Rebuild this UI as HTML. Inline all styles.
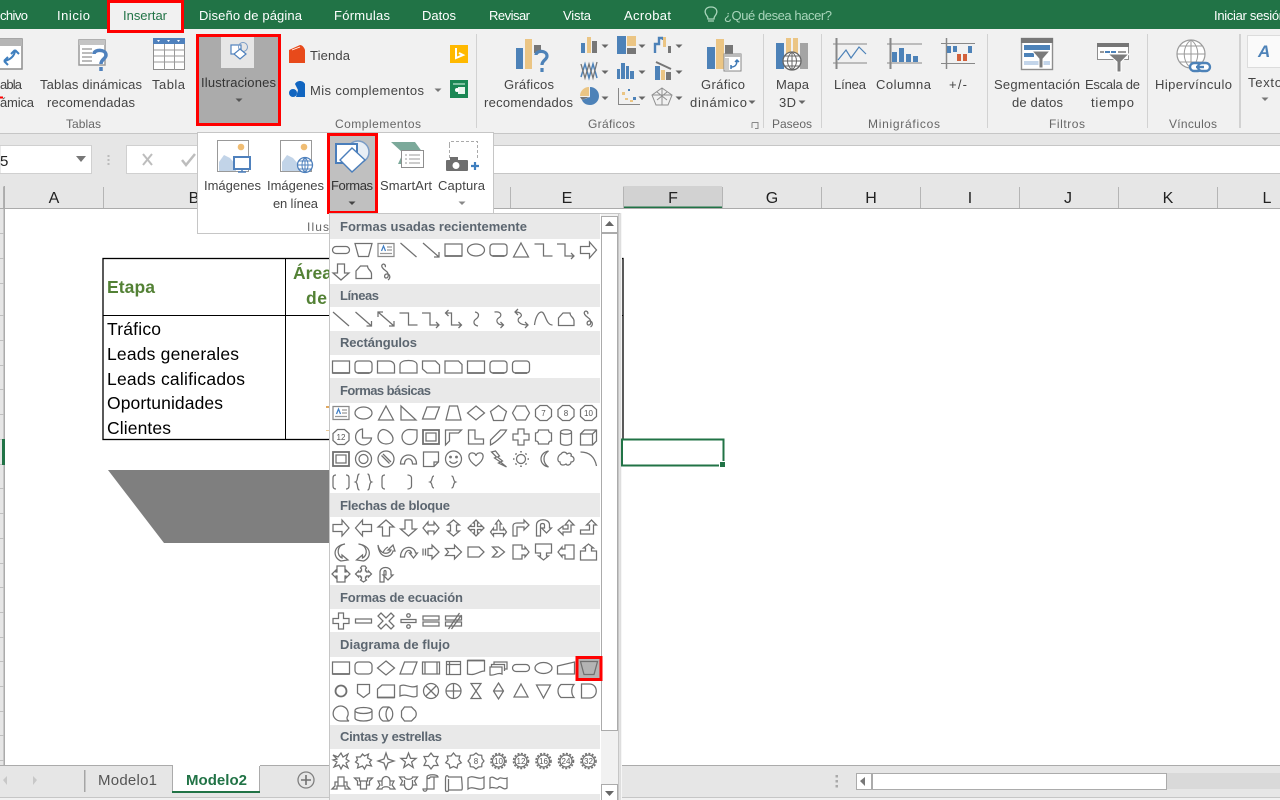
<!DOCTYPE html>
<html lang="es"><head><meta charset="utf-8"><title>Excel - Insertar formas</title>
<style>
html,body{margin:0;padding:0;background:#fff;width:1280px;height:800px;overflow:hidden}
svg{display:block}
text{font-family:"Liberation Sans",Arial,sans-serif;font-size:13px;fill:#444}
.t{fill:#fff;font-size:13px}
.g{fill:#666;font-size:12px}
.h{font-weight:bold;fill:#5c6670;font-size:13px}
.c{font-size:16px;fill:#222}
.d{font-size:17.5px;fill:#000}
.b{font-size:17.5px;font-weight:bold;fill:#538135}
.sh{fill:none;stroke:#707070;stroke-width:1.25}
.n{font-size:8px;fill:#555;stroke:none;text-anchor:middle}
</style></head><body>
<svg width="1280" height="800" viewBox="0 0 1280 800" xmlns="http://www.w3.org/2000/svg">
<defs>
<path id="ar" d="M-3.5-1.5H3.5L0 2Z"/>
<g id="rr"><rect x="-8.5" y="-3.5" width="17" height="7" rx="3.5"/></g>
<g id="mo"><path d="M-8.5-6.5H8.5L5 6.5H-5Z"/></g>
<g id="tb"><rect x="-8" y="-6.5" width="16" height="13" stroke="#8a8a8a"/><path d="M-4.5 1-2.5-4-.5 1" stroke="#3f7ec4"/><path d="M-6 3.5H6M1-3H6M1 0H6" stroke="#999"/></g>
<g id="ln"><path d="M-8-7 8 7"/></g>
<g id="la"><path d="M-8-7 8 7M8 2V7H3"/></g>
<g id="da"><path d="M-8-7 8 7M8 2V7H3M-8-2V-7H-3"/></g>
<g id="rc"><rect x="-8.5" y="-6" width="17" height="12"/><path d="M-8.5 6H8.5" stroke-width="1.8"/></g>
<g id="el"><ellipse rx="8.5" ry="6"/></g>
<g id="rrc"><rect x="-8.5" y="-6" width="17" height="12" rx="3"/><path d="M-6 6H6" stroke-width="1.8"/></g>
<g id="tri"><path d="M0-7 7.5 7H-7.5Z"/></g>
<g id="eb"><path d="M-9-6H0V6H9"/></g>
<g id="eba"><path d="M-9-6H-1V6H8M5 3 8 6 5 9"/></g>
<g id="dea"><path d="M-8-6H-2V6H8M5 3 8 6 5 9M-5-9-8-6-5-3"/></g>
<g id="ra"><path d="M-8-3.5H1V-8L8 0 1 8V3.500H-8Z"/></g>
<g id="la2"><path d="M8-3.500H-1V-8L-8 0-1 8V3.500H8Z"/></g>
<g id="ua"><path d="M-3.500 8V-1H-8L0-8 8-1H3.500V8Z"/></g>
<g id="dwa"><path d="M-3.500-8V1H-8L0 8 8 1H3.500V-8Z"/></g>
<g id="ff"><path d="M-7.500 6.500V-1L-3-6H4C4-2 8-2 8 2V6.500Z"/></g>
<g id="sc"><path d="M-3-8C-6-6-3-3 0-1 3 1 3 6 0 6-2 6-2 2 1 2 4 2 5 6 2 8M-3-8C-1-8 0-6-1-5"/></g>
<g id="cv"><path d="M-1-7C4-6 3-2 0 0-3 2-3 6 2 7"/></g>
<g id="cva"><path d="M-4-7C3-8 4-3 0-1-3 1-2 6 5 6M2 3 5 6 2 9"/></g>
<g id="dcv"><path d="M-6-7C1-7 2-3-2-1-4 1-3 6 7 6M4 3 7 6 4 9M-3-10-6-7-3-4"/></g>
<g id="sca"><path d="M-9 6C-8-2-5-7-2-7 2-7 2 6 9 6"/></g>
<g id="sn1"><path d="M-8.500 6V-6H5L8.500-2.500V6Z"/></g>
<g id="sn2"><path d="M-8.500 6V-2C-8.500-5-5-6.500 0-6.500S8.500-5 8.500-2V6Z"/></g>
<g id="sn3"><path d="M-8.500-6H4.500L8.500-2V6H-4L-8.500 2Z"/></g>
<g id="sn4"><path d="M-8.500 6V-6H3C6-6 8.500-4 8.500-1V6Z"/></g>
<g id="rtri"><path d="M-7.500-7 7.500 7H-7.500Z"/></g>
<g id="pa"><path d="M-4-6H8.500L4 6H-8.500Z"/></g>
<g id="tr"><path d="M-4-7H4L7.500 7H-7.500Z"/></g>
<g id="di"><path d="M0-7 8.500 0 0 7-8.500 0Z"/></g>
<g id="pe"><path d="M0-7.500 8-1.500 5 7.500H-5L-8-1.500Z"/></g>
<g id="he"><path d="M-4.500-7H4.500L8.500 0 4.500 7H-4.500L-8.500 0Z"/></g>
<g id="oc"><path d="M-3.500-7.500H3.500L8-3.500V3.500L3.500 7.500H-3.500L-8 3.500V-3.500Z"/></g>
<g id="pi"><path d="M-1-8A8 8 0 1 0 8 1H-1Z"/></g>
<g id="ch"><path d="M-3-7.500C2-7.500 7-2 7 2 7 6 3 7 0 7-4 7-8 4-8 0-8-4-6-7-3-7.500Z"/></g>
<g id="td"><path d="M8.500-7V0A7.500 7.500 0 1 1 1-7.500Z"/></g>
<g id="fr"><rect x="-8" y="-7" width="16" height="14" stroke-width="1.8"/><rect x="-5" y="-4" width="10" height="8"/></g>
<g id="hf"><path d="M-8 8V-7H8L5-4H-4V4Z"/></g>
<g id="lsh"><path d="M-7.500-7H-1V2H7.500V7H-7.500Z"/></g>
<g id="ds"><path d="M-8 8V3L2-7H8C6-3-2 5-8 8Z"/></g>
<g id="pl"><path d="M-3-8H3V-3H8V3H3V8H-3V3H-8V-3H-3Z"/></g>
<g id="pq"><path d="M-5-7H5C5-5 6-4 8-4V4C6 4 5 5 5 7H-5C-5 5-6 4-8 4V-4C-6-4-5-5-5-7Z"/></g>
<g id="cn"><path d="M-5.500-5V6C-5.500 9 5.500 9 5.500 6V-5C5.500-8-5.500-8-5.500-5 -5.500-2 5.500-2 5.500-5"/></g>
<g id="cu"><path d="M-8-3H4V8H-8ZM-8-3-4-7H8V4L4 8M4-3 8-7"/></g>
<g id="don"><circle r="8"/><circle r="4.500"/></g>
<g id="no"><circle r="8"/><path d="M-4.500-3.500 3.500 4.500M-3-5 5 3"/></g>
<g id="ba"><path d="M-8 5C-8-7 8-7 8 5H4C4-2-4-2-4 5Z"/></g>
<g id="fc"><path d="M-7.500-7H7.500V3L3 7.500H-7.500ZM7.500 3H3V7.500"/></g>
<g id="sm"><circle r="8"/><circle cx="-3" cy="-2" r=".8"/><circle cx="3" cy="-2" r=".8"/><path d="M-4 2C-2 5 2 5 4 2"/></g>
<g id="ht"><path d="M0 7C-10 0-8-7-3-6-1-6 0-4 0-3 0-4 1-6 3-6 8-7 10 0 0 7Z"/></g>
<g id="lt"><path d="M-7-7-3-8 1-3-1-2 4 2 2 3 8 8 0 4 2 3-4-1-2-2Z"/></g>
<g id="su"><circle r="4.500"/><path d="M0-8V-6.500M0 6.500V8M-8 0H-6.500M6.500 0H8M-5.500-5.500-4.500-4.500M4.500 4.500 5.500 5.500M-5.500 5.500-4.500 4.500M4.500-4.500 5.500-5.500" stroke-width="1.600"/></g>
<g id="mn"><path d="M5-8C-5-6-5 6 5 8-1 4-1-4 5-8Z"/></g>
<g id="cl"><path d="M-5-5C-3-8 0-7 1-5 4-7 6-5 5-3 9-2 9 3 5 3 5 6 1 7 0 5-3 7-6 6-6 3-9 3-9-3-5-5Z"/></g>
<g id="ac"><path d="M-8-7C0-7 6-3 8 7"/></g>
<g id="db"><path d="M-5-7C-7-7-8-6-8-4V-2M-8 2V4C-8 6-7 7-5 7M5-7C7-7 8-6 8-4V-2M8 2V4C8 6 7 7 5 7M-8-2V2M8-2V2"/></g>
<g id="dbr"><path d="M-4-8C-7-8-5-1-8 0-5 1-7 8-4 8M4-8C7-8 5-1 8 0 5 1 7 8 4 8"/></g>
<g id="lb"><path d="M-1-7C-3-7-4-6-4-4V4C-4 6-3 7-1 7"/></g>
<g id="rb"><path d="M-1-7C1-7 3-6 3-4V4C3 6 1 7-1 7"/></g>
<g id="lbr"><path d="M3-6C0-6 2-1-1 0 2 1 0 6 3 6"/></g>
<g id="rbr"><path d="M-2-6C1-6-1-1 2 0-1 1 1 6-2 6"/></g>
<g id="lr"><path d="M-8 0-3-6V-3H3V-6L8 0 3 6V3H-3V6Z"/></g>
<g id="ud"><path d="M0-8 6-3H3V3H6L0 8-6 3H-3V-3H-6Z"/></g>
<g id="qu"><path d="M0-8 3-5H1.500V-1.500H5V-3L8 0 5 3V1.500H1.500V5H3L0 8-3 5H-1.500V1.500H-5V3L-8 0-5-3V-1.500H-1.500V-5H-3Z"/></g>
<g id="lru"><path d="M0-8 3-4H1.500V2H5V0L8 4 5 8V5.500H-5V8L-8 4-5 0V2H-1.500V-4H-3Z"/></g>
<g id="be"><path d="M-8 8V-2C-8-4-6-5-4-5H3V-8L8-3 3 2V-1H-4V8Z"/></g>
<g id="ut"><path d="M-7 8V-3C-7-10 6-10 6-3V0H8L3 5-2 0H1V-3C1-5-3-5-3-3V8Z"/></g>
<g id="lu"><path d="M3-8 8-3H5V4H-3V7L-8 2-3-2V1H2V-3H-1Z"/></g>
<g id="bu"><path d="M3-8 8-3H5V6H-8V2H1V-3H-2Z"/></g>
<g id="cr"><path d="M4-8C-4-7-5 3 1 6V3L7 8 0 9C-8 6-9-6 4-8Z"/></g>
<g id="cl2"><path d="M-5-8C4-7 5 3-1 6V3L-7 8 0 9C8 6 9-6-5-8Z"/></g>
<g id="cup"><path d="M-8-7C-6 3 3 3 5-2H2L7-7 9-1H7C5 7-7 7-8-7ZM-3 1C-2-2 0-4 2-5"/></g>
<g id="cdn"><path d="M-8 5C-8-7 6-7 7 1H9L5 6 1 1H3C2-3-3-3-4 5Z"/></g>
<g id="st"><path d="M-8-3.500V3.500M-5.500-3.500V3.500M-3-3.500H1V-7L8 0 1 7V3.500H-3Z"/></g>
<g id="no2"><path d="M-8-3.500H1V-7L8 0 1 7V3.500H-8L-5 0Z"/></g>
<g id="pg"><path d="M-8-5H3L8 0 3 5H-8Z"/></g>
<g id="chv"><path d="M-6-5H0L6 0 0 5H-6L-1 0Z"/></g>
<g id="rca"><path d="M-8-7H1V-3H4V-5L8 0 4 5V3H1V7H-8Z"/></g>
<g id="dca"><path d="M-8-8H8V1H3V4H5L0 8-5 4H-3V1H-8Z"/></g>
<g id="lca"><path d="M8-7H-1V-3H-4V-5L-8 0-4 5V3H-1V7H8Z"/></g>
<g id="uca"><path d="M-8 8H8V-1H3V-4H5L0-8-5-4H-3V-1H-8Z"/></g>
<g id="lrc"><path d="M-4-8H4V-2H5V-4L9 0 5 4V2H4V8H-4V2H-5V4L-9 0-5-4V-2H-4Z"/></g>
<g id="qc"><path d="M-1.500-8H1.500L3-6 2-5V-3H3V-2H5V-3L8 0 5 3V2H3V3H2V5L3 6 0 8-3 6-2 5V3H-3V2H-5V3L-8 0-5-3V-2H-3V-3H-2V-5L-3-6Z"/></g>
<g id="ca"><path d="M-6 8V-2C-6-8 5-8 5-2V1H7L2 6-3 1H0V-2C0-4-2-4-2-2V8Z"/></g>
<g id="eqp"><path d="M-2.500-8H2.500V-2.500H8V2.500H2.500V8H-2.500V2.500H-8V-2.500H-2.500Z"/></g>
<g id="eqm"><rect x="-8" y="-2" width="16" height="4"/></g>
<g id="eqx"><path d="M-5-8 0-3 5-8 8-5 3 0 8 5 5 8 0 3-5 8-8 5-3 0-8-5Z"/></g>
<g id="eqd"><rect x="-7.500" y="-1.500" width="15" height="3"/><circle cy="-5.500" r="1.800"/><circle cy="5.500" r="1.800"/></g>
<g id="eqe"><rect x="-8" y="-5" width="16" height="4"/><rect x="-8" y="1" width="16" height="4"/></g>
<g id="eqn"><rect x="-8" y="-5" width="16" height="4"/><rect x="-8" y="1" width="16" height="4"/><path d="M-5 8 6-8M-2 8 8-6"/></g>
<g id="fa"><rect x="-8.500" y="-6" width="17" height="12" rx="3.500"/></g>
<g id="fp"><rect x="-8.500" y="-6" width="17" height="12"/><path d="M-6-6V6M6-6V6"/></g>
<g id="fi"><rect x="-7" y="-6.500" width="14" height="13"/><path d="M-7-3.500H7M-4-6.500V6.500"/></g>
<g id="fd"><path d="M-8.500-7.500H8.500V3C3 3 0 8-8.500 6Z"/><path d="M-8.500-7.500H8.500" stroke-width="1.800"/></g>
<g id="fm"><path d="M-8.500-1H3.500V6C-1 4-4 8-8.500 7ZM-7-1V-3.500H6V3M-4.500-3.500V-6H8.500V1H6"/></g>
<g id="ft"><rect x="-8.500" y="-3.500" width="17" height="7" rx="3.500"/></g>
<g id="fe"><ellipse rx="8.500" ry="5.500"/></g>
<g id="fmi"><path d="M-8.500-2 8.500-6V6H-8.500Z"/></g>
<g id="fc2"><circle r="5.500" stroke-width="1.800"/></g>
<g id="fo"><path d="M-6-6.500H6V2L0 6.500-6 2Z"/></g>
<g id="fcd"><path d="M-4-6H8.500V6.500H-8.500V-2Z"/><path d="M-8.500 6.500H8.500" stroke-width="1.800"/></g>
<g id="fta"><path d="M-8.500-5C-4-8 2-2 8.500-5V5C4 8-2 2-8.500 5Z"/></g>
<g id="fsj"><circle r="7.500"/><path d="M-5-5 5 5M-5 5 5-5"/></g>
<g id="for"><circle r="7.500"/><path d="M-7.500 0H7.500M0-7.500V7.500"/></g>
<g id="fcl"><path d="M-5-7.500H5L-5 7.500H5Z"/></g>
<g id="fso"><path d="M0-8 5 0 0 8-5 0ZM-5 0H5"/></g>
<g id="fex"><path d="M0-7 7 6H-7Z"/></g>
<g id="fme"><path d="M-7-6H7L0 7Z"/></g>
<g id="fsd"><path d="M-5-6.500H8C5-3 5 3 8 6.500H-5C-9 3-9-3-5-6.500Z"/></g>
<g id="fde"><path d="M-7-7H1C10-7 10 7 1 7H-7Z"/></g>
<g id="fsq"><path d="M8 7H0A7.500 7.500 0 1 1 6 3.500C6 5 6 6 8 7Z"/></g>
<g id="fdk"><path d="M-8.500-3.500V4C-8.500 8 8.500 8 8.500 4V-3.500C8.500-7.500-8.500-7.500-8.500-3.500-8.500 .5 8.500 .5 8.500-3.500"/></g>
<g id="fda"><path d="M-3-7H3C8-4 8 4 3 7H-3C-8 4-8-4-3-7ZM3-7C-1-4-1 4 3 7"/></g>
<g id="fdi"><path d="M-4-7H3L7-3C8-1 8 1 7 3L3 7H-4L-7 3V-3Z"/></g>
<g id="x1"><path d="M-8-6-3-4 0-8 2-4 7-7 5-2 8 0 5 2 7 7 2 4 0 8-2 4-7 6-4 1-8-1-4-2Z"/></g>
<g id="x2"><path d="M-7-4-3-4-1-7 1-5 5-7 4-3 8-1 6 1 8 5 3 4 1 8-1 5-6 7-5 3-8 1-6-1Z"/></g>
<g id="s4"><path d="M0-8 2-2 8 0 2 2 0 8-2 2-8 0-2-2Z"/></g>
<g id="s5"><path d="M0-8 2-2.600H7.600L3.100 1 4.700 6.500 0 3.200-4.700 6.500-3.100 1-7.600-2.600H-2Z"/></g>
<g id="s6"><path d="M0-8 2.600-4.500H7L4.800 0 7 4.500H2.600L0 8-2.600 4.500H-7L-4.800 0-7-4.500H-2.600Z"/></g>
<g id="s7"><path d="M0-8 2.400-5 6.250-5 5.400-1.200 7.800 1.800 4.300 3.400 3.500 7.200 0 5.500-3.500 7.200-4.300 3.400-7.800 1.800-5.400-1.200-6.250-5-2.400-5Z"/></g>
<g id="s8"><path d="M0-8 2.500-6 5.700-5.700 6-2.500 8 0 6 2.500 5.700 5.700 2.500 6 0 8-2.500 6-5.700 5.700-6 2.500-8 0-6-2.500-5.700-5.700-2.500-6Z"/></g>
<g id="sd"><circle r="6"/><circle r="7.500" stroke-dasharray="2 1.500" stroke-width="1.600"/></g>
<g id="rb1"><path d="M-9 6-6 3V-1H-3V-6H3V-1H6V3L9 6H4V3H-4V6ZM-3-1V3M3-1V3"/></g>
<g id="rb2"><path d="M-9-5-6-2V2H-3V6H3V2H6V-2L9-5H4V-2H-4V-5ZM-3-2V2M3-2V2"/></g>
<g id="rb3"><path d="M-9 6-6 2-8-2H-4C-4-8 4-8 4-2H8L6 2 9 6H4C4 3-4 3-4 6ZM-4-2V3M4-2V3"/></g>
<g id="rb4"><path d="M-9-6-6-2-8 2H-4C-4 8 4 8 4 2H8L6-2 9-6H4C4-3-4-3-4-6ZM-4 2V-3M4 2V-3"/></g>
<g id="sv"><path d="M-4-6C-4-9 7-9 7-6H-1M-4-6V6C-4 9-8 9-8 6H3V-6M-1-6C-1-4-4-4-4-6"/></g>
<g id="sh2"><path d="M-8-4V7C-8 9-5 9-5 7H8C9 7 9 5 8-6H-5C-6-8-8-8-8-4M-5-4V7"/></g>
<g id="wv"><path d="M-8-5C-3-9 3-2 8-6V5C3 9-3 2-8 6Z"/></g>
<g id="dw"><path d="M-8.500-5C-5-8-2-2 0-4 2-7 5-3 8.500-5V5C5 8 2 2 0 4-2 7-5 3-8.500 5Z"/></g>
</defs>

<!-- sheet -->
<rect width="1280" height="800" fill="#fff"/>
<rect x="0" y="186" width="1280" height="22" fill="#e6e6e6"/>
<rect x="623" y="186" width="99" height="22" fill="#d2d2d2"/>
<rect x="623" y="206.500" width="99" height="2" fill="#217346"/>
<rect y="208" width="1280" height="1" fill="#ababab"/>
<path d="M103.500 187V208M510.500 187V208M623.500 187V208M722.500 187V208M821.500 187V208M920.500 187V208M1019.500 187V208M1118.500 187V208M1217.500 187V208M3.500 187V208" stroke="#b5b5b5" fill="none"/>
<g text-anchor="middle"><text class="c" x="54" y="203">A</text><text class="c" x="194" y="203">B</text><text class="c" x="567" y="203">E</text><text class="c" x="673" y="203">F</text><text class="c" x="772" y="203">G</text><text class="c" x="871" y="203">H</text><text class="c" x="970" y="203">I</text><text class="c" x="1068" y="203">J</text><text class="c" x="1168" y="203">K</text><text class="c" x="1267" y="203">L</text></g>
<rect x="0" y="209" width="4" height="556" fill="#e6e6e6"/>
<rect x="3.500" y="186" width="1.500" height="580" fill="#ababab"/>
<path d="M0 233.500H4M0 258.500H4M0 283.500H4M0 315.500H4M0 340.500H4M0 365.500H4M0 389.500H4M0 414.500H4M0 439.500H4M0 464.500H4M0 488.500H4M0 513.500H4M0 538.500H4M0 563.500H4M0 587.500H4M0 612.500H4M0 637.500H4M0 661.500H4M0 686.500H4M0 711.500H4M0 735.500H4M0 760.500H4" stroke="#c0c0c0"/>
<rect x="2" y="439" width="3" height="26" fill="#217346"/>

<!-- table -->
<rect x="103" y="258.500" width="520" height="181" fill="none" stroke="#000" stroke-width="1.300"/>
<path d="M285.500 258V439M103 315.500H623" stroke="#000"/>
<text class="b" x="107" y="293" textLength="48">Etapa</text>
<text class="b" x="293" y="279" textLength="39">Área</text>
<text class="b" x="306" y="304" textLength="21">de</text>
<text class="d" x="107" y="335" textLength="54">Tráfico</text>
<text class="d" x="107" y="360" textLength="132">Leads generales</text>
<text class="d" x="107" y="385" textLength="138">Leads calificados</text>
<text class="d" x="107" y="409" textLength="116">Oportunidades</text>
<text class="d" x="107" y="434" textLength="64">Clientes</text>
<rect x="326" y="406" width="3" height="2" fill="#e0a860"/><rect x="326" y="430" width="3" height="1" fill="#eccb98"/>
<polygon points="108,470 330,470 330,543 164,543" fill="#7f7f7f"/>

<!-- sheet tabs -->
<rect x="0" y="765" width="1280" height="32" fill="#e6e6e6"/>
<rect y="765" width="1280" height="1" fill="#ababab"/>
<rect y="797" width="1280" height="1" fill="#c6c6c6"/><rect y="798" width="1280" height="2" fill="#f1f1f1"/>
<path d="M3 780 7 776V785ZM37 780 33 776V785Z" fill="#c8c8c8"/>
<rect x="84" y="770" width="1.500" height="22" fill="#a5a5a5"/>
<text x="98" y="785" textLength="59" style="font-size:15px;fill:#555">Modelo1</text>
<rect x="173" y="765" width="87" height="27" fill="#fff"/>
<path d="M172.500 766V792M259.500 766V792" stroke="#ababab"/>
<rect x="172" y="791" width="88" height="2" fill="#217346"/>
<text x="186" y="785" textLength="61" style="font-size:15px;font-weight:bold;fill:#217346">Modelo2</text>
<circle cx="306" cy="780" r="8" fill="none" stroke="#808080" stroke-width="1.300"/><path d="M301 780H311M306 775V785" stroke="#707070" stroke-width="1.600"/>
<rect x="835.500" y="775" width="2.500" height="2.500" fill="#aaa"/><rect x="835.500" y="780" width="2.500" height="2.500" fill="#aaa"/><rect x="835.500" y="785" width="2.500" height="2.500" fill="#aaa"/>
<rect x="1166" y="773" width="114" height="16" fill="#d9d9d9"/>
<rect x="856.500" y="773.500" width="310" height="16" fill="#fff" stroke="#ababab"/>
<rect x="871" y="774" width="2" height="15" fill="#ababab"/>
<path d="M860 781 865 777V786Z" fill="#777"/>

<!-- formula bar -->
<rect y="133" width="1280" height="53" fill="#e6e6e6"/>
<rect y="145" width="1280" height="1" fill="#c6c6c6"/>
<rect y="146" width="1280" height="27" fill="#fff"/>
<rect y="173" width="1280" height="1" fill="#c6c6c6"/>
<rect x="91" y="145" width="35" height="29" fill="#e6e6e6"/>
<rect x="0" y="145.500" width="91.500" height="28" fill="#fff" stroke="#d0d0d0"/>
<text x="0" y="166" style="font-size:15px;fill:#222">5</text>
<path d="M76 156H86L81 162Z" fill="#777"/>
<path d="M108.500 155v2M108.500 159v2M108.500 163v2" stroke="#bbb" stroke-width="2"/>
<rect x="126.500" y="145.500" width="80" height="28" fill="#fff" stroke="#d0d0d0"/>
<path d="M143 154 152 165M152 154 143 165" stroke="#bdbdbd" stroke-width="2"/>
<path d="M182 160 186 165 195 154" stroke="#bdbdbd" stroke-width="2.500" fill="none"/>

<!-- title & ribbon -->
<rect y="29" width="1280" height="104" fill="#f1f1f1"/>
<rect y="133" width="1280" height="1" fill="#c6c6c6"/>
<rect width="1280" height="29" fill="#217346"/>
<text class="t" x="0" y="20" textLength="28">chivo</text>
<text class="t" x="57" y="20" textLength="33">Inicio</text>
<rect x="108.500" y="1.500" width="74" height="30" fill="#f1f1f1" stroke="#f00" stroke-width="3"/>
<text x="123" y="20" textLength="44" style="fill:#217346">Insertar</text>
<text class="t" x="199" y="20" textLength="103">Diseño de página</text>
<text class="t" x="334" y="20" textLength="56">Fórmulas</text>
<text class="t" x="422" y="20" textLength="34">Datos</text>
<text class="t" x="489" y="20" textLength="41">Revisar</text>
<text class="t" x="563" y="20" textLength="28">Vista</text>
<text class="t" x="624" y="20" textLength="47">Acrobat</text>
<path d="M707 16C703 11 706 7 711 7S719 11 715 16C714 17 714 18 714 19H708C708 18 708 17 707 16ZM708 21H714" fill="none" stroke="#a9d5bb" stroke-width="1.300"/>
<text x="724" y="20" textLength="108" style="fill:#a9d5bb">¿Qué desea hacer?</text>
<text class="t" x="1214" y="20" textLength="72">Iniciar sesión</text>

<!-- separators -->
<path d="M476.500 34V128M763.500 34V128M821.500 34V128M987.500 34V128M1147.500 34V128" stroke="#d2d2d2"/>
<rect x="1239" y="34" width="2" height="94" fill="#d2d2d2"/>

<!-- Tablas -->
<rect x="-5" y="39" width="27" height="30" fill="#fff" stroke="#8e8e8e" stroke-width="1.500"/><rect x="-5" y="39" width="27" height="7" fill="#b5b5b5"/>
<path d="M15 50C15 56 10 60 4 61M4 61 8 57M4 61 8 65M15 50 11 54M15 50 19 54" fill="none" stroke="#3f7fbf" stroke-width="2"/>
<text x="0" y="89" textLength="22">abla</text><text x="0" y="107" textLength="34">ámica</text>
<path d="M0 97.500H3" stroke="#f00" stroke-width="2"/>
<rect x="79" y="40" width="26" height="25" fill="#fff" stroke="#9a9a9a" stroke-width="1.500"/><rect x="79" y="40" width="26" height="5" fill="#c4c4c4"/>
<path d="M82 49H92M82 53H92M82 57H92M82 61H92" stroke="#bbb" stroke-width="2"/>
<path d="M94 54C94 49 106 49 106 55 106 59 101 59 101 64M101 67V71" fill="none" stroke="#4f81bd" stroke-width="3.500"/>
<rect x="153.500" y="38.500" width="31" height="31" fill="#fff" stroke="#8e8e8e"/>
<rect x="153" y="38" width="32" height="6" fill="#4f81bd"/>
<path d="M154 50H185M154 56H185M154 62H185M164.500 44V70M174.500 44V70" stroke="#9a9a9a"/>
<path d="M157 40h3l-1.500 2zM167 40h3l-1.500 2zM177 40h3l-1.500 2z" fill="#fff"/>
<text x="40" y="89" textLength="102">Tablas dinámicas</text>
<text x="47" y="107" textLength="88">recomendadas</text>
<text x="152" y="89" textLength="33">Tabla</text>
<text class="g" x="66" y="128" textLength="35">Tablas</text>

<!-- Ilustraciones -->
<rect x="197.500" y="35.500" width="82" height="89" fill="#ababab" stroke="#f00" stroke-width="3"/>
<rect x="221" y="37" width="33" height="31" fill="#e6e6e6"/>
<rect x="231" y="45" width="10" height="9" fill="#fff" stroke="#4f81bd" stroke-width="1.200"/><circle cx="243" cy="47" r="4.500" fill="none" stroke="#7a9cc6"/>
<path d="M240 49 246 54 240 59 234 54Z" fill="#fff" stroke="#4f81bd" stroke-width="1.200"/>
<text x="201" y="87" textLength="75" style="fill:#333">Ilustraciones</text>
<use href="#ar" x="239" y="100" fill="#555"/>

<!-- Complementos -->
<path d="M289 50 300 45C302 45 304 47 305 50V63H289Z" fill="#e84a1b"/><path d="M292 50 300 47" stroke="#fff" stroke-width=".8"/>
<text x="310" y="60" textLength="40">Tienda</text>
<rect x="450" y="45" width="18" height="18" fill="#ffb900"/><path d="M456 48V58L463 55 459 53" fill="none" stroke="#fff" stroke-width="2"/>
<circle cx="293" cy="93" r="4" fill="#1165c0"/><path d="M295 84C297 80 303 80 305 84V97H296L298 90Z" fill="#1165c0"/>
<text x="310" y="95" textLength="114">Mis complementos</text>
<use href="#ar" x="438" y="90" fill="#777"/>
<rect x="450" y="80" width="18" height="18" fill="#1a8754"/><path d="M453 84H465" stroke="#9fd4b9" stroke-width="1.500"/><rect x="458" y="87" width="7" height="7" fill="#e8f5ee"/><circle cx="457" cy="90" r="2" fill="#fff"/>
<text class="g" x="335" y="128" textLength="86">Complementos</text>

<!-- Graficos -->
<g>
<rect x="516" y="48" width="7" height="21" fill="#4d82b8"/><rect x="525" y="39" width="7" height="30" fill="#ebc584"/><rect x="534" y="45" width="7" height="8" fill="#777"/>
<path d="M536 55C536 50 547 50 547 56 547 60 542 60 542 65M542 68V72" fill="none" stroke="#4d82b8" stroke-width="3.200"/>
</g>
<text x="504" y="89" textLength="50">Gráficos</text><text x="484" y="107" textLength="89">recomendados</text>
<g fill="#4d82b8">
<rect x="581" y="43" width="4" height="10"/><rect x="587" y="37" width="4" height="16" fill="#ebc584"/><rect x="592" y="41" width="5" height="12" fill="#777"/>
<rect x="617" y="36" width="9" height="18"/><rect x="627" y="36" width="9" height="10" fill="#ebc584"/><rect x="627" y="48" width="9" height="6" fill="#777"/>
<path d="M655 53V44H659V38H663M663 38V40" fill="none" stroke="#4d82b8" stroke-width="2.400"/><rect x="663" y="37" width="3" height="10" fill="#ebc584"/><rect x="668" y="46" width="3" height="7" fill="#777"/>
<path d="M581 77 585 64 589 78 593 64 597 78" fill="none" stroke="#4d82b8" stroke-width="1.500"/><path d="M581 64 585 78 589 64 593 78 597 62" fill="none" stroke="#777" stroke-width="1.300"/>
<rect x="617" y="69" width="3" height="10"/><rect x="621" y="63" width="4" height="16"/><rect x="626" y="66" width="3" height="13"/><rect x="630" y="71" width="4" height="8"/>
<rect x="655" y="66" width="5" height="14"/><rect x="661" y="70" width="4" height="10" fill="#ebc584"/><rect x="666" y="72" width="5" height="8" fill="#777"/><path d="M656 62 671 69" stroke="#777" stroke-width="2"/>
<path d="M589 87A9 9 0 0 0 580 96H589Z" fill="#ebc584"/><path d="M590 87A9 9 0 0 1 590 105C586 105 583 103 582 100L590 97Z"/><path d="M580 97H589L582 100Z" fill="#777"/>
<path d="M618.500 88V104.500H640" fill="none" stroke="#888"/><rect x="622" y="92" width="3" height="3" fill="#ebc584"/><rect x="628" y="89" width="2" height="2"/><rect x="625" y="98" width="3" height="2" fill="#ebc584"/><rect x="633" y="97" width="3" height="3"/><rect x="630" y="100" width="3" height="2" fill="#ebc584"/>
<path d="M662 88 672 95 668 105H656L652 95Z M662 88V105M652 95 672 95M656 105 668 105M657 92 667 100M667 92 657 100" fill="none" stroke="#8f8f8f" stroke-width="1"/>
</g>
<g fill="#666"><use href="#ar" x="605" y="46"/><use href="#ar" x="642" y="46"/><use href="#ar" x="679" y="46"/><use href="#ar" x="605" y="72"/><use href="#ar" x="642" y="72"/><use href="#ar" x="679" y="72"/><use href="#ar" x="605" y="98"/><use href="#ar" x="642" y="98"/><use href="#ar" x="679" y="98"/></g>
<rect x="707" y="47" width="8" height="22" fill="#4d82b8"/><rect x="716" y="39" width="8" height="30" fill="#ebc584"/><rect x="725" y="45" width="8" height="9" fill="#777"/>
<rect x="724" y="54" width="17" height="17" fill="#fff" stroke="#888"/><rect x="724" y="54" width="17" height="3" fill="#bbb"/><rect x="725" y="58" width="4" height="12" fill="#ccc"/><path d="M731 67C736 67 737 64 737 60M735 62 737 60 739 62M731 65V69" fill="none" stroke="#3c78b5" stroke-width="1.500"/>
<text x="701" y="89" textLength="44">Gráfico</text><text x="690" y="107" textLength="57">dinámico</text><use href="#ar" x="752" y="102" fill="#666"/>
<text class="g" x="588" y="128" textLength="47">Gráficos</text>
<path d="M752 122.500H758V128.500M755 128.500H758V125.500M752 122.500V128" fill="none" stroke="#888"/>

<!-- Mapa -->
<rect x="776" y="43" width="8" height="26" fill="#4d82b8"/><rect x="786" y="38" width="5" height="22" fill="#ebc584"/><rect x="793" y="38" width="5" height="22" fill="#ebc584"/><rect x="800" y="43" width="8" height="26" fill="#a4a4a4"/>
<circle cx="792" cy="61" r="9" fill="#fff" stroke="#666" stroke-width="1.300"/><path d="M783 61H801M792 52V70M785 56H799M785 66H799M792 52C786 57 786 65 792 70 798 65 798 57 792 52" fill="none" stroke="#666"/>
<text x="776" y="89" textLength="33">Mapa</text><text x="779" y="107" textLength="17">3D</text><use href="#ar" x="802" y="102" fill="#666"/>
<text class="g" x="772" y="128" textLength="40">Paseos</text>

<!-- Sparklines -->
<path d="M833 44H867M833 63H867" stroke="#888" fill="none"/><path d="M836.500 38V69" stroke="#888" stroke-width="2"/>
<path d="M838 60 846 50 851 58 859 47 866 54" fill="none" stroke="#4d82b8" stroke-width="1.200"/>
<text x="834" y="89" textLength="32">Línea</text>
<path d="M887 44H922M887 63H922" stroke="#888"/><path d="M890.500 38V69" stroke="#888" stroke-width="2"/>
<g fill="#4d82b8"><rect x="892" y="52" width="5" height="10"/><rect x="899" y="48" width="5" height="14"/><rect x="906" y="54" width="5" height="8"/><rect x="913" y="56" width="5" height="6"/></g>
<text x="876" y="89" textLength="55">Columna</text>
<path d="M941 43.500H975M941 63.500H975" stroke="#888"/><path d="M946.500 38V69" stroke="#888" stroke-width="1.500"/>
<g fill="#4d82b8"><rect x="947" y="46" width="4" height="7"/><rect x="953" y="46" width="4" height="6"/><rect x="968" y="46" width="4" height="7"/></g><rect x="957" y="54" width="4" height="7" fill="#d2603a"/><rect x="963" y="54" width="4" height="7" fill="#d2603a"/>
<text x="949" y="89" textLength="18">+/-</text>
<text class="g" x="868" y="128" textLength="72">Minigráficos</text>

<!-- Filtros -->
<rect x="1021.500" y="38.500" width="31" height="31" fill="#fff" stroke="#8e8e8e" stroke-width="1.400"/><rect x="1021" y="38" width="32" height="5" fill="#777"/>
<rect x="1024" y="45" width="26" height="5" fill="#4d82b8"/><rect x="1024" y="53" width="10" height="4" fill="#4d82b8"/><rect x="1024" y="61" width="26" height="4" fill="#c3d5ea"/>
<path d="M1032 51H1050L1043 59V68H1039V59Z" fill="#7c7c7c" stroke="#fff"/>
<text x="994" y="89" textLength="86">Segmentación</text><text x="1012" y="107" textLength="51">de datos</text>
<rect x="1097.500" y="43.500" width="31" height="16" fill="#fff" stroke="#8e8e8e"/><rect x="1097" y="43" width="32" height="4" fill="#777"/>
<rect x="1100" y="51" width="4" height="2" fill="#9a9a9a"/><rect x="1105" y="51" width="5" height="2" fill="#4d82b8"/><rect x="1111" y="51" width="5" height="2" fill="#4d82b8"/><rect x="1118" y="51" width="8" height="2" fill="#9a9a9a"/>
<path d="M1108 54H1129L1121 62V72H1117V62Z" fill="#7c7c7c" stroke="#fff"/>
<text x="1085" y="89" textLength="55">Escala de</text><text x="1091" y="107" textLength="43">tiempo</text>
<text class="g" x="1049" y="128" textLength="36">Filtros</text>

<!-- Vinculos -->
<circle cx="1191" cy="54" r="14" fill="#fff" stroke="#9a9a9a" stroke-width="1.200"/><path d="M1177 54H1205M1191 40V68M1180 46H1202M1180 62H1202M1191 40C1182 46 1182 62 1191 68 1200 62 1200 46 1191 40" fill="none" stroke="#9a9a9a"/>
<rect x="1190" y="63" width="12" height="8" rx="4" fill="#fff" stroke="#4d82b8" stroke-width="2.400"/><rect x="1198" y="63" width="12" height="8" rx="4" fill="#fff" stroke="#4d82b8" stroke-width="2.400"/><path d="M1196 67H1204" stroke="#4d82b8" stroke-width="2.400"/>
<text x="1155" y="89" textLength="77">Hipervínculo</text>
<text class="g" x="1169" y="128" textLength="48">Vínculos</text>

<!-- Texto -->
<rect x="1247.500" y="35.500" width="40" height="32" fill="#fafafa" stroke="#dcdcdc"/>
<text x="1258" y="57" style="font-size:17px;font-weight:bold;font-style:italic;fill:#4d82b8">A</text>
<text x="1248" y="87" textLength="34">Texto</text><use href="#ar" x="1265" y="99" fill="#777"/>

<!-- Illustrations popup -->
<rect x="197.500" y="132.500" width="296" height="101" fill="#fff" stroke="#c6c6c6"/>
<g>
<rect x="217.500" y="140.500" width="31" height="31" fill="#fff" stroke="#999"/><circle cx="241" cy="147" r="3.300" fill="#f0bd73"/>
<path d="M219 171V162L224 155 230 158 236 165V171Z" fill="#c2d4e8"/>
<rect x="234" y="157" width="16" height="12" fill="#fff" stroke="#4f81bd" stroke-width="2"/><path d="M242 169V172M238 172H246" stroke="#4f81bd" stroke-width="1.500"/>
<rect x="280.500" y="140.500" width="31" height="31" fill="#fff" stroke="#999"/><circle cx="304" cy="147" r="3.300" fill="#f0bd73"/>
<path d="M282 171V162L287 155 293 158 299 165V171Z" fill="#c2d4e8"/>
<circle cx="305" cy="165" r="7.500" fill="#fff" stroke="#4f81bd" stroke-width="1.300"/><path d="M297.500 165H312.500M305 157.500V172.500M299 161H311M299 169H311M305 157.500C301 161 301 169 305 172.500 309 169 309 161 305 157.500" fill="none" stroke="#4f81bd"/>
</g>
<text x="204" y="190" textLength="57">Imágenes</text>
<text x="267" y="190" textLength="57">Imágenes</text><text x="273" y="208" textLength="45">en línea</text>
<rect x="328.500" y="134.500" width="48" height="78" fill="#c0c0c0" stroke="#f00" stroke-width="3"/>
<circle cx="358" cy="152" r="11" fill="#e8eef5" stroke="#7a9cc6" stroke-width="1.500"/>
<rect x="336" y="144" width="21" height="19" fill="#fff" stroke="#4a7ebb" stroke-width="2"/>
<path d="M352 148 365 160 352 172 340 160Z" fill="#fff" stroke="#4a7ebb" stroke-width="1.400"/>
<text x="331" y="190" textLength="42" style="fill:#333">Formas</text><use href="#ar" x="352" y="203" fill="#444"/>
<path d="M391 142H415L423 153 415 164H398L403 153Z" fill="#7ba99a"/>
<rect x="401.500" y="150.500" width="22" height="17" fill="#fff" stroke="#8e8e8e"/><path d="M405 155H407M409 155H420M405 159H407M409 159H420M405 163H407M409 163H420" stroke="#999"/>
<text x="380" y="190" textLength="52">SmartArt</text>
<path d="M449.500 145V141.500H477.500V158" fill="none" stroke="#aaa" stroke-dasharray="3 2"/><path d="M449.500 145V158" stroke="#aaa" stroke-dasharray="3 2"/>
<rect x="446" y="160" width="22" height="11" rx="1" fill="#6e6e6e"/><rect x="450" y="157" width="8" height="4" fill="#6e6e6e"/><circle cx="456" cy="165.500" r="4" fill="#fff" stroke="#6e6e6e"/>
<path d="M471 166H479M475 162V170" stroke="#3f7fbf" stroke-width="2.200"/>
<text x="438" y="190" textLength="47">Captura</text><use href="#ar" x="462" y="203" fill="#888"/>
<text class="g" x="307" y="231" textLength="22">Ilus</text>
<rect x="620" y="213" width="2" height="587" fill="#f6f6f6"/>

<!-- selected cell -->
<rect x="622" y="439.500" width="101.500" height="26" fill="none" stroke="#217346" stroke-width="2"/>
<rect x="719" y="461" width="7" height="7" fill="#fff"/><rect x="720" y="462" width="5" height="5" fill="#217346"/>

<!-- Shapes panel -->
<rect x="329" y="213" width="291" height="587" fill="#fff"/>
<path d="M329.500 800V213.500H620V800" fill="none" stroke="#c6c6c6"/>
<rect x="601" y="214" width="18" height="586" fill="#f1f1f1"/>
<path d="M618.500 214V800" stroke="#c6c6c6"/>
<rect x="601.500" y="216.500" width="16" height="16" fill="#fff" stroke="#ababab"/><path d="M605 226H614L609.500 221Z" fill="#666"/>
<rect x="601.500" y="233.500" width="16" height="497" fill="#fff" stroke="#ababab"/>
<rect x="601.500" y="784.500" width="16" height="16" fill="#fff" stroke="#ababab"/><path d="M605 791H614L609.500 796Z" fill="#666"/>
<g fill="#e9e9e9"><rect x="330" y="214" width="270" height="25"/><rect x="330" y="284" width="270" height="23"/><rect x="330" y="331" width="270" height="24"/><rect x="330" y="378" width="270" height="25"/><rect x="330" y="493" width="270" height="24"/><rect x="330" y="585" width="270" height="24"/><rect x="330" y="632" width="270" height="25"/><rect x="330" y="725" width="270" height="24"/><rect x="330" y="794" width="270" height="6"/></g>
<text class="h" x="340" y="231" textLength="187">Formas usadas recientemente</text>
<text class="h" x="340" y="300" textLength="39">Líneas</text>
<text class="h" x="340" y="347" textLength="77">Rectángulos</text>
<text class="h" x="340" y="395" textLength="91">Formas básicas</text>
<text class="h" x="340" y="510" textLength="110">Flechas de bloque</text>
<text class="h" x="340" y="602" textLength="123">Formas de ecuación</text>
<text class="h" x="340" y="649" textLength="110">Diagrama de flujo</text>
<text class="h" x="340" y="741" textLength="102">Cintas y estrellas</text>

<rect x="577" y="657.500" width="24" height="22" fill="#b4b4b4" stroke="#f00" stroke-width="3"/>

<g class="sh">
<g transform="translate(0 250)"><use href="#rr" x="341"/><use href="#mo" x="363.500"/><use href="#tb" x="386"/><use href="#ln" x="408.500"/><use href="#la" x="431"/><use href="#rc" x="453.500"/><use href="#el" x="476"/><use href="#rrc" x="498.500"/><use href="#tri" x="521"/><use href="#eb" x="543.500"/><use href="#eba" x="566"/><use href="#ra" x="588.500"/></g>
<g transform="translate(0 272)"><use href="#dwa" x="341"/><use href="#ff" x="363.500"/><use href="#sc" x="386"/></g>
<g transform="translate(0 319)"><use href="#ln" x="341"/><use href="#la" x="363.500"/><use href="#da" x="386"/><use href="#eb" x="408.500"/><use href="#eba" x="431"/><use href="#dea" x="453.500"/><use href="#cv" x="476"/><use href="#cva" x="498.500"/><use href="#dcv" x="521"/><use href="#sca" x="543.500"/><use href="#ff" x="566"/><use href="#sc" x="588.500"/></g>
<g transform="translate(0 367)"><use href="#rc" x="341"/><use href="#rrc" x="363.500"/><use href="#sn4" x="386"/><use href="#sn2" x="408.500"/><use href="#sn3" x="431"/><use href="#sn1" x="453.500"/><use href="#rc" x="476"/><use href="#rrc" x="498.500"/><use href="#rrc" x="521"/></g>
<g transform="translate(0 413)"><use href="#tb" x="341"/><use href="#el" x="363.500"/><use href="#tri" x="386"/><use href="#rtri" x="408.500"/><use href="#pa" x="431"/><use href="#tr" x="453.500"/><use href="#di" x="476"/><use href="#pe" x="498.500"/><use href="#he" x="521"/><use href="#oc" x="543.500"/><text class="n" x="543.500" y="3">7</text><use href="#oc" x="566"/><text class="n" x="566" y="3">8</text><use href="#oc" x="588.500"/><text class="n" x="588.500" y="3">10</text></g>
<g transform="translate(0 437)"><use href="#oc" x="341"/><text class="n" x="341" y="3">12</text><use href="#pi" x="363.500"/><use href="#ch" x="386"/><use href="#td" x="408.500"/><use href="#fr" x="431"/><use href="#hf" x="453.500"/><use href="#lsh" x="476"/><use href="#ds" x="498.500"/><use href="#pl" x="521"/><use href="#pq" x="543.500"/><use href="#cn" x="566"/><use href="#cu" x="588.500"/></g>
<g transform="translate(0 459)"><use href="#fr" x="341"/><use href="#don" x="363.500"/><use href="#no" x="386"/><use href="#ba" x="408.500"/><use href="#fc" x="431"/><use href="#sm" x="453.500"/><use href="#ht" x="476"/><use href="#lt" x="498.500"/><use href="#su" x="521"/><use href="#mn" x="543.500"/><use href="#cl" x="566"/><use href="#ac" x="588.500"/></g>
<g transform="translate(0 482)"><use href="#db" x="341"/><use href="#dbr" x="363.500"/><use href="#lb" x="386"/><use href="#rb" x="408.500"/><use href="#lbr" x="431"/><use href="#rbr" x="453.500"/></g>
<g transform="translate(0 528)"><use href="#ra" x="341"/><use href="#la2" x="363.500"/><use href="#ua" x="386"/><use href="#dwa" x="408.500"/><use href="#lr" x="431"/><use href="#ud" x="453.500"/><use href="#qu" x="476"/><use href="#lru" x="498.500"/><use href="#be" x="521"/><use href="#ut" x="543.500"/><use href="#lu" x="566"/><use href="#bu" x="588.500"/></g>
<g transform="translate(0 552)"><use href="#cr" x="341"/><use href="#cl2" x="363.500"/><use href="#cup" x="386"/><use href="#cdn" x="408.500"/><use href="#st" x="431"/><use href="#no2" x="453.500"/><use href="#pg" x="476"/><use href="#chv" x="498.500"/><use href="#rca" x="521"/><use href="#dca" x="543.500"/><use href="#lca" x="566"/><use href="#uca" x="588.500"/></g>
<g transform="translate(0 574)"><use href="#lrc" x="341"/><use href="#qc" x="363.500"/><use href="#ca" x="386"/></g>
<g transform="translate(0 621)"><use href="#eqp" x="341"/><use href="#eqm" x="363.500"/><use href="#eqx" x="386"/><use href="#eqd" x="408.500"/><use href="#eqe" x="431"/><use href="#eqn" x="453.500"/></g>
<g transform="translate(0 668)"><use href="#rc" x="341"/><use href="#fa" x="363.500"/><use href="#di" x="386"/><use href="#pa" x="408.500"/><use href="#fp" x="431"/><use href="#fi" x="453.500"/><use href="#fd" x="476"/><use href="#fm" x="498.500"/><use href="#ft" x="521"/><use href="#fe" x="543.500"/><use href="#fmi" x="566"/><use href="#mo" x="589"/></g>
<g transform="translate(0 691)"><use href="#fc2" x="341"/><use href="#fo" x="363.500"/><use href="#fcd" x="386"/><use href="#fta" x="408.500"/><use href="#fsj" x="431"/><use href="#for" x="453.500"/><use href="#fcl" x="476"/><use href="#fso" x="498.500"/><use href="#fex" x="521"/><use href="#fme" x="543.500"/><use href="#fsd" x="566"/><use href="#fde" x="588.500"/></g>
<g transform="translate(0 714)"><use href="#fsq" x="341"/><use href="#fdk" x="363.500"/><use href="#fda" x="386"/><use href="#fdi" x="408.500"/></g>
<g transform="translate(0 761)"><use href="#x1" x="341"/><use href="#x2" x="363.500"/><use href="#s4" x="386"/><use href="#s5" x="408.500"/><use href="#s6" x="431"/><use href="#s7" x="453.500"/><use href="#s8" x="476"/><text class="n" x="476" y="3">8</text><use href="#sd" x="498.500"/><text class="n" x="498.500" y="3">10</text><use href="#sd" x="521"/><text class="n" x="521" y="3">12</text><use href="#sd" x="543.500"/><text class="n" x="543.500" y="3">16</text><use href="#sd" x="566"/><text class="n" x="566" y="3">24</text><use href="#sd" x="588.500"/><text class="n" x="588.500" y="3">32</text></g>
<g transform="translate(0 783)"><use href="#rb1" x="341"/><use href="#rb2" x="363.500"/><use href="#rb3" x="386"/><use href="#rb4" x="408.500"/><use href="#sv" x="431"/><use href="#sh2" x="453.500"/><use href="#wv" x="476"/><use href="#dw" x="498.500"/></g>
</g>
</svg>
</body></html>
